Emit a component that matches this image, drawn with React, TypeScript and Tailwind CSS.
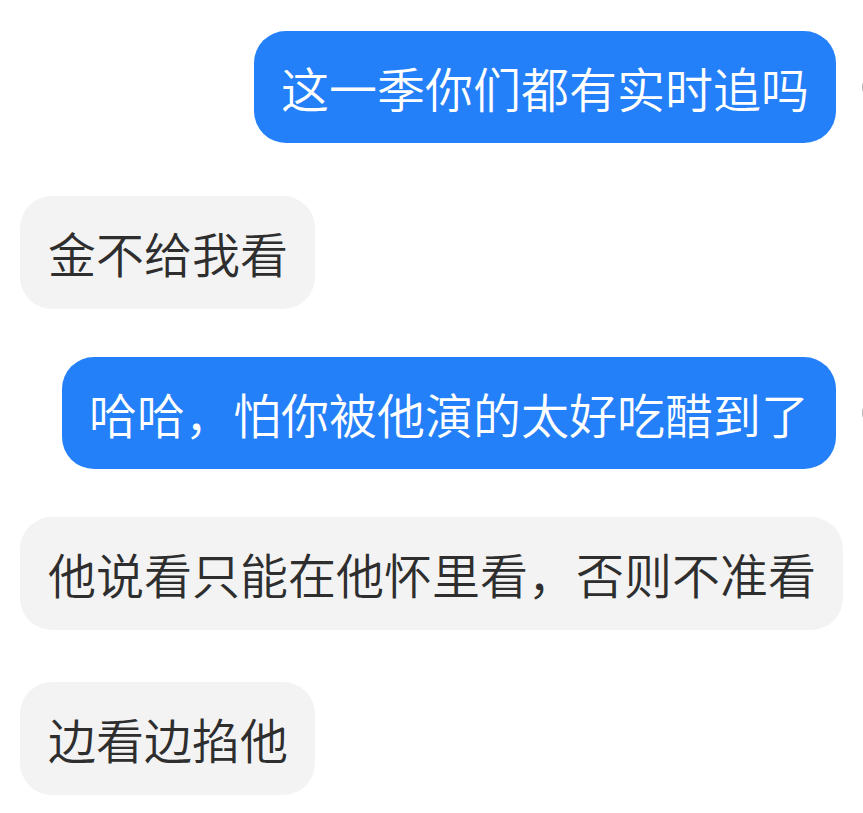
import React from "react";

const font = {
  fontFamily: '"Noto Sans CJK SC", "Noto Sans", sans-serif',
};

function Outgoing({ text, className = "" }: { text: string; className?: string }) {
  return (
    <div className={`flex items-center ${className}`}>
      <div className="ml-auto rounded-[32px] bg-[#2480f8] px-[27px] py-[30px] text-[48px] font-[350] leading-[52px] text-white whitespace-nowrap">
        {text}
      </div>
      <div className="flex w-[27px] shrink-0 items-center">
        <div className="ml-[26px] h-[24px] w-[24px] shrink-0 rounded-full border-2 border-[#b0b0b0]" />
      </div>
    </div>
  );
}

function Incoming({ text, className = "" }: { text: string; className?: string }) {
  return (
    <div className={`flex pl-[20px] ${className}`}>
      <div className="rounded-[32px] bg-[#f3f3f3] pl-[28px] pr-[27px] py-[30px] text-[48px] font-[350] leading-[53px] text-[#2e2e2e] whitespace-nowrap">
        {text}
      </div>
    </div>
  );
}

export default function App() {
  return (
    <div
      className="flex h-[813px] w-[863px] flex-col overflow-hidden bg-white pt-[31px]"
      style={font}
    >
      <Outgoing text="这一季你们都有实时追吗" />
      <Incoming text="金不给我看" className="mt-[53px]" />
      <Outgoing text="哈哈，怕你被他演的太好吃醋到了" className="mt-[48px]" />
      <Incoming text="他说看只能在他怀里看，否则不准看" className="mt-[48px]" />
      <Incoming text="边看边掐他" className="mt-[52px]" />
    </div>
  );
}
